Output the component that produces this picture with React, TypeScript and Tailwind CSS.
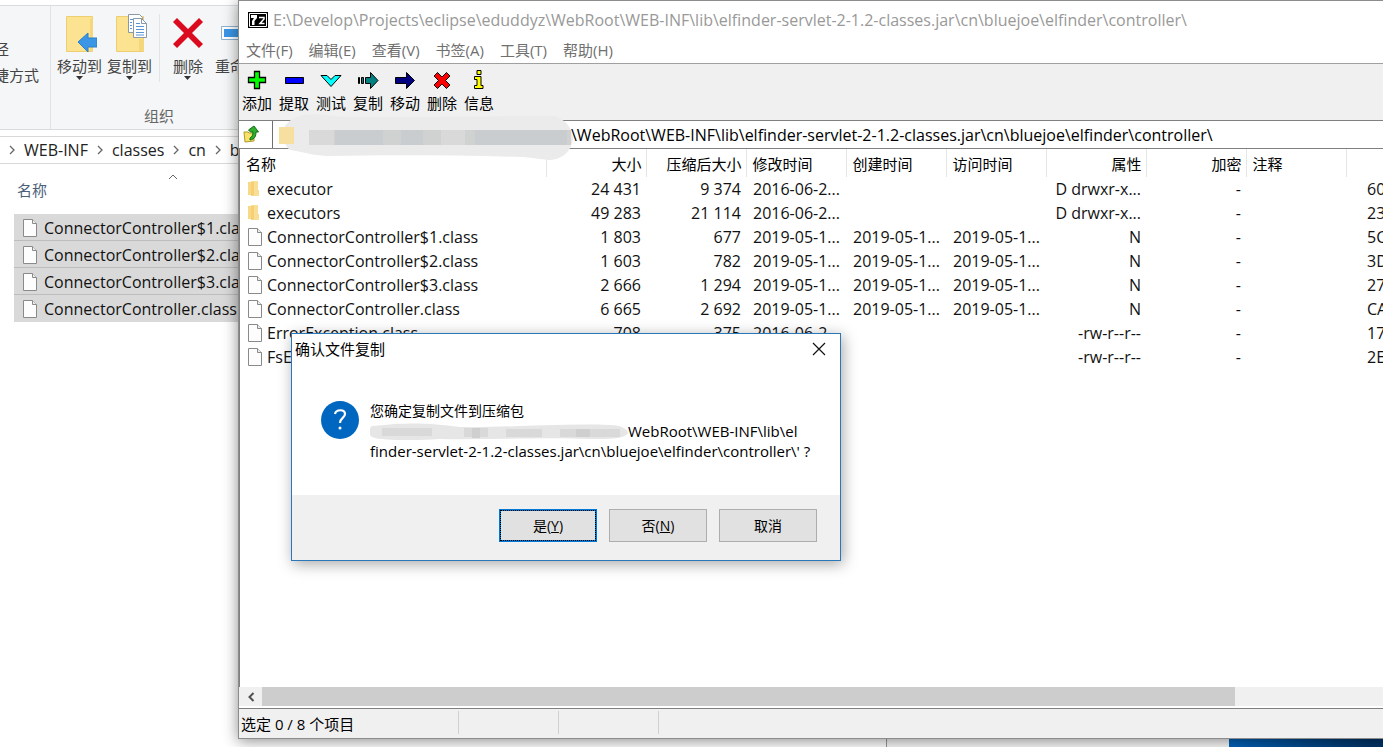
import type { ReactNode } from "react";

type Entry = {
  name: string;
  folder?: boolean;
  size: string;
  packed: string;
  modified?: string;
  created?: string;
  accessed?: string;
  attrs: string;
  crc: string;
};

const entries: Entry[] = [
  { name: "executor", folder: true, size: "24 431", packed: "9 374", modified: "2016-06-2...", attrs: "D drwxr-x...", crc: "60" },
  { name: "executors", folder: true, size: "49 283", packed: "21 114", modified: "2016-06-2...", attrs: "D drwxr-x...", crc: "23" },
  { name: "ConnectorController$1.class", size: "1 803", packed: "677", modified: "2019-05-1...", created: "2019-05-1...", accessed: "2019-05-1...", attrs: "N", crc: "5C" },
  { name: "ConnectorController$2.class", size: "1 603", packed: "782", modified: "2019-05-1...", created: "2019-05-1...", accessed: "2019-05-1...", attrs: "N", crc: "3D" },
  { name: "ConnectorController$3.class", size: "2 666", packed: "1 294", modified: "2019-05-1...", created: "2019-05-1...", accessed: "2019-05-1...", attrs: "N", crc: "27" },
  { name: "ConnectorController.class", size: "6 665", packed: "2 692", modified: "2019-05-1...", created: "2019-05-1...", accessed: "2019-05-1...", attrs: "N", crc: "CA" },
  { name: "ErrorException.class", size: "708", packed: "375", modified: "2016-06-2...", attrs: "-rw-r--r--", crc: "17" },
  { name: "FsException.class", size: "", packed: "", attrs: "-rw-r--r--", crc: "2E" },
];

const explorerFiles = [
  "ConnectorController$1.class",
  "ConnectorController$2.class",
  "ConnectorController$3.class",
  "ConnectorController.class",
];

const menus = ["文件(F)", "编辑(E)", "查看(V)", "书签(A)", "工具(T)", "帮助(H)"];

function FileIcon() {
  return (
    <svg width="16" height="20" viewBox="0 0 16 20" className="shrink-0">
      <path d="M1.5 1.5h9l4 4v13h-13z" fill="#fdfdfd" stroke="#8a8a8a" />
      <path d="M10.5 1.5v4h4" fill="#eee" stroke="#8a8a8a" />
    </svg>
  );
}

function FolderIcon() {
  return (
    <svg width="16" height="20" viewBox="0 0 16 20" className="shrink-0">
      <path d="M1 3h3v13H1z" fill="#f7d988" />
      <path d="M4 2h7v9h1v6H4z" fill="#f9df95" />
      <path d="M4 3h3v13l-3 1z" fill="#f5cf72" />
    </svg>
  );
}

function MoveToIcon() {
  return (
    <svg width="34" height="40" viewBox="0 0 34 40">
      <path d="M3.5 2.5h26v35h-26z" fill="#fbe391" stroke="#edcf72" />
      <path d="M27 4.5v33h3v-33z" fill="#f4d67b" />
      <path d="M15 28l10-9v5h9v9h-9v5z" fill="#3b96e6" stroke="#2a7fcb" />
    </svg>
  );
}

function CopyToIcon() {
  return (
    <svg width="34" height="40" viewBox="0 0 34 40">
      <path d="M3.5 2.5h27v35h-27z" fill="#fbe391" stroke="#edcf72" />
      <path d="M26 25h5v12h-5z" fill="#f4d67b" />
      <path d="M15.5 0.5h11l3 3v15h-14z" fill="#fff" stroke="#8b98a6" />
      <path d="M20.5 4.5h8l5 5v14h-13z" fill="#fff" stroke="#8b98a6" />
      <path d="M28.5 4.5v5h5" fill="none" stroke="#8b98a6" />
      <path d="M23 9.5h4M23 12.5h8M23 15.5h8M23 18.5h8M23 21h8M17 5.5h3M17 8.5h2M17 11.5h2M17 14.5h2" stroke="#5b94d6" />
    </svg>
  );
}

function DeleteIcon() {
  return (
    <svg width="34" height="40" viewBox="0 0 34 40">
      <path d="M2 8l4-4 11 11L28 4l4 4-11 11 11 11-4 4-11-11L6 34l-4-4 11-11z" fill="#dc0a1e" />
    </svg>
  );
}

function RenameIcon() {
  return (
    <svg width="34" height="40" viewBox="0 0 34 40">
      <path d="M0.5 12.5h33v13h-33z" fill="#fff" stroke="#8fb2d3" />
      <path d="M3 15h24v8H3z" fill="#3b96e6" />
    </svg>
  );
}

function RibbonButton({ icon, label, arrow = true }: { icon: ReactNode; label: string; arrow?: boolean }) {
  return (
    <button className="flex shrink-0 flex-col items-center whitespace-nowrap">
      {icon}
      <span className="mt-0.5 leading-5">{label}</span>
      {arrow && (
        <svg width="8" height="4" viewBox="0 0 8 4">
          <path d="M0 0h7L3.5 4z" fill="#333" />
        </svg>
      )}
    </button>
  );
}

function Chevron() {
  return (
    <svg width="6" height="10" viewBox="0 0 6 10" className="shrink-0">
      <path d="M1 1l4 4-4 4" fill="none" stroke="#666" strokeWidth="1.3" />
    </svg>
  );
}

function Explorer() {
  return (
    <section className="absolute inset-y-0 left-0 w-[887px] overflow-hidden border-r border-[#999] bg-white pt-[5px]">
      <div className="flex h-[125px] border-y border-[#dadbdc] bg-[#f5f6f7] text-[#444]">
        <div className="flex w-[51px] shrink-0 flex-col items-end gap-[6px] border-r border-[#e2e3e4] pr-[11px] pt-[33px] leading-5 whitespace-nowrap">
          <span className="pr-[30px]">径</span>
          <span>捷方式</span>
        </div>
        <div className="flex shrink-0 flex-col">
          <div className="flex pt-2 pl-1.5">
            <div className="flex gap-[5px]">
              <RibbonButton icon={<MoveToIcon />} label="移动到" />
              <RibbonButton icon={<CopyToIcon />} label="复制到" />
            </div>
            <div className="ml-[7px] h-[68px] border-l border-[#e2e3e4]" />
            <div className="ml-[11px] flex items-start gap-[10px]">
              <RibbonButton icon={<DeleteIcon />} label="删除" />
              <RibbonButton icon={<RenameIcon />} label="重命名" arrow={false} />
            </div>
          </div>
          <div className="mt-auto mb-[3px] pl-[93px] leading-5 text-[#666]">组织</div>
        </div>
      </div>
      <nav className="mt-1.5 flex h-7 items-center gap-[9px] border-y border-[#d9d9d9] pl-[9px] text-base text-[#222]">
        <Chevron />
        <a href="#web-inf">WEB-INF</a>
        <Chevron />
        <a href="#classes">classes</a>
        <Chevron />
        <a href="#cn">cn</a>
        <Chevron />
        <a href="#bluejoe">bluejoe</a>
      </nav>
      <div className="flex h-[50px] flex-col pt-[10px] pl-[17px] text-[#4c607a]">
        <svg width="10" height="6" viewBox="0 0 10 6" className="ml-[151px]">
          <path d="M1 5l4-4 4 4" fill="none" stroke="#666" />
        </svg>
        <span className="leading-5">名称</span>
      </div>
      <ul className="pl-[14px] text-base text-[#111]">
        {explorerFiles.map((name) => (
          <li key={name} className="flex h-[27px] items-center gap-1.5 border-b border-[#bdbdbd] bg-[#d9d9d9] pt-0.5 pl-2 last:border-[#d9d9d9]">
            <FileIcon />
            {name}
          </li>
        ))}
      </ul>
    </section>
  );
}

const tools: { label: string; icon: ReactNode }[] = [
  { label: "添加", icon: <path d="M8.5 1.5h5v6h6v5h-6v6h-5v-6h-6v-5h6z" fill="#0f0" stroke="#000" strokeWidth="1.3" /> },
  { label: "提取", icon: <path d="M2.5 7.5h18v6h-18z" fill="#00f" stroke="#000" /> },
  { label: "测试", icon: <path d="M1 5.5h6l4 4 4-4h6L11 16.5z" fill="#0ff" stroke="#000" /> },
  {
    label: "复制",
    icon: <path d="M1.5 7.5h1v6h-1zM4.5 7.5h2v6h-2zM8.5 7.5h5v-5l7.5 8-7.5 8v-5h-5z" fill="#008080" stroke="#000" />,
  },
  { label: "移动", icon: <path d="M1.5 7.5h11v-5l8 8-8 8v-5h-11z" fill="#000080" stroke="#000" /> },
  {
    label: "删除",
    icon: <path d="M3 6l3.5-3.5L11 7l4.5-4.5L19 6l-4.5 4.5L19 15l-3.5 3.5L11 14l-4.5 4.5L3 15l4.5-4.5z" fill="#f00" stroke="#000" />,
  },
  {
    label: "信息",
    icon: <path d="M9 0.5h4v4H9zM6.5 6.500H13v9h2v3H6.5v-3H9v-6H6.5z" fill="#ff0" stroke="#000" />,
  },
];

function Smudge() {
  return (
    <svg width="302" height="50" viewBox="0 0 302 50" className="pointer-events-none absolute -top-[9px] left-0">
      <path d="M12 14C18 6 26 2 42 2l30 3h50l160-1c10 4 16 10 18 22-1 12-10 22-24 22l-26-3c-70-2-140-2-195-1-12 0-25-4-38-6C12 34 8 26 12 14z" fill="#ebebeb" />
      <path d="M6 15h15v17H6z" fill="#f7dfa0" />
      <path d="M36 18h262v15H36z" fill="#d0d1d1" />
      <path d="M36 18h25v15H36zM168 18h24v15h-24z" fill="#d9d9d9" />
      <path d="M62 18h48v15H62zM128 18h22v15h-22zM202 18h92v15h-92z" fill="#cacdcf" />
    </svg>
  );
}

function SevenZip() {
  return (
    <section className="absolute top-0 right-0 bottom-2 left-[238px] flex flex-col border border-r-0 border-[#8c8c8c] bg-white shadow-[0_2px_14px_rgba(0,0,0,0.45)]">
      <header className="flex h-[37px] shrink-0 items-center gap-[5px] pl-[9px] text-base whitespace-nowrap text-[#999]">
        <svg width="20" height="16" viewBox="0 0 20 16">
          <path d="M0 0h20v16H0z" fill="#000" />
          <path d="M1.5 1.5h17v13h-17z" fill="none" stroke="#fff" />
          <path d="M3 3h6v3L6.5 9v4H4V9l2-3H3z" fill="#fff" />
          <path d="M11 5.5h5v1.5l-4 4.5h4.5" fill="none" stroke="#fff" strokeWidth="1.5" />
        </svg>
        <h1>E:\Develop\Projects\eclipse\eduddyz\WebRoot\WEB-INF\lib\elfinder-servlet-2-1.2-classes.jar\cn\bluejoe\elfinder\controller\</h1>
      </header>
      <div className="flex h-[26px] shrink-0 items-center gap-4 border-b border-[#a0a0a0] pl-[7px] text-[#707070]">
        {menus.map((m) => (
          <button key={m}>{m}</button>
        ))}
      </div>
      <div className="flex h-14 shrink-0 gap-[7px] bg-[#f0f0f0] pt-1.5 pl-[3px]">
        {tools.map((t) => (
          <button key={t.label} className="flex w-[30px] flex-col items-center whitespace-nowrap">
            <svg width="22" height="21" viewBox="0 0 22 21">{t.icon}</svg>
            <span className="leading-6">{t.label}</span>
          </button>
        ))}
      </div>
      <div className="flex h-[29px] shrink-0 border-y border-[#808080]">
        <button aria-label="上一级" className="w-[33px] pb-0.5 pl-1">
          <svg width="16" height="18" viewBox="0 0 16 18">
            <path d="M1 7h4l1 1h5v8L2 17z" fill="#f8e26a" stroke="#b09a2a" />
            <path d="M7 15c5-1 6-4 6-8h2.500L11 1 5.500 5l2 2H10c0 3-1 5-3 6z" fill="#2fae2f" stroke="#146e14" />
          </svg>
        </button>
        <div className="relative flex flex-1 items-center border-l border-[#707070] pl-[298px]">
          <Smudge />
          <input
            aria-label="地址"
            className="w-full bg-transparent text-base text-black outline-none"
            defaultValue="\WebRoot\WEB-INF\lib\elfinder-servlet-2-1.2-classes.jar\cn\bluejoe\elfinder\controller\"
          />
        </div>
      </div>
      <div className="flex-1 overflow-hidden border-l border-[#808080]">
        <table className="w-[1206px] table-fixed whitespace-nowrap text-base text-[#111]">
          <colgroup>
            <col className="w-[306px]" />
            <col span={9} className="w-[100px]" />
          </colgroup>
          <thead className="text-[15px]">
            <tr className="h-7 text-black [&>th]:border-r [&>th]:border-[#e5e5e5] [&>th]:pt-0.5 [&>th]:pr-1 [&>th]:pl-1.5 [&>th]:font-normal">
              <th className="text-left">名称</th>
              <th className="text-right">大小</th>
              <th className="text-right">压缩后大小</th>
              <th className="text-left">修改时间</th>
              <th className="text-left">创建时间</th>
              <th className="text-left">访问时间</th>
              <th className="text-right">属性</th>
              <th className="text-right">加密</th>
              <th className="text-left">注释</th>
              <th />
            </tr>
          </thead>
          <tbody>
            {entries.map((e) => (
              <tr key={e.name} className="h-6 [&>td]:pr-[5px] [&>td]:pl-[7px]">
                <td>
                  <div className="flex items-center gap-1">
                    {e.folder ? <FolderIcon /> : <FileIcon />}
                    {e.name}
                  </div>
                </td>
                <td className="text-right">{e.size}</td>
                <td className="text-right">{e.packed}</td>
                <td>{e.modified}</td>
                <td>{e.created}</td>
                <td>{e.accessed}</td>
                <td className="text-right">{e.attrs}</td>
                <td className="text-right">-</td>
                <td />
                <td>
                  <span className="pl-3.5">{e.crc}</span>
                </td>
              </tr>
            ))}
          </tbody>
        </table>
      </div>
      <div className="flex h-[19px] shrink-0 bg-[#f0f0f0]">
        <button aria-label="向左滚动" className="flex w-[23px] items-center justify-center">
          <svg width="8" height="10" viewBox="0 0 8 10">
            <path d="M6.5 1l-4 4 4 4" fill="none" stroke="#505050" strokeWidth="2" />
          </svg>
        </button>
        <div className="mr-[148px] flex-1 bg-[#cdcdcd]" />
      </div>
      <footer className="mt-0.5 flex h-[30px] shrink-0 border-t border-[#808080] bg-[#f0f0f0] pt-0.5 pb-1 leading-[26px] text-black">
        <div className="w-[220px] border-r border-[#d0d0d0] pl-0.5">选定 0 / 8 个项目</div>
        <div className="w-[100px] border-r border-[#d0d0d0]" />
        <div className="w-[100px] border-r border-[#d0d0d0]" />
      </footer>
    </section>
  );
}

function ConfirmDialog() {
  return (
    <section
      role="dialog"
      aria-labelledby="dialog-title"
      className="absolute top-[333px] left-[291px] flex w-[550px] flex-col border border-[#2b78b8] bg-white text-black shadow-[2px_3px_14px_rgba(0,0,0,0.35)]"
    >
      <header className="flex h-[30px] items-center justify-between pr-[14px] pl-[3px]">
        <h2 id="dialog-title">确认文件复制</h2>
        <button aria-label="关闭">
          <svg width="14" height="14" viewBox="0 0 14 14">
            <path d="M1 1l12 12M13 1L1 13" stroke="#111" strokeWidth="1.2" />
          </svg>
        </button>
      </header>
      <div className="flex h-[131px] gap-[10px] pt-9 pl-7 text-sm">
        <svg width="40" height="40" viewBox="0 0 40 40" className="shrink-0">
          <circle cx="20" cy="20" r="19" fill="#0067c0" />
          <path d="M15 14c1-5 10-5 10 0 0 4-5 4-5 9" fill="none" stroke="#fff" strokeWidth="2.2" />
          <circle cx="20" cy="28" r="1.5" fill="#fff" />
        </svg>
        <div className="pt-px leading-5 whitespace-nowrap">
          <p>您确定复制文件到压缩包</p>
          <p className="flex items-center text-[15px]">
            <svg width="258" height="18" viewBox="0 0 258 18">
              <path d="M2 4C40 0 60 1 90 5c40 1 100-4 150-2 12 0 18 5 18 8-4 6-16 6-40 6-40-2-100 1-150 0-30 2-60 1-66-2-5-3-4-8 0-11z" fill="#e6e6e6" />
              <path d="M12 6h50v8H12zM94 6h24v9H94zM136 7h36v8h-36zM190 7h60v8h-60z" fill="#d9d9d9" />
              <path d="M102 6h8v10h-8zM206 7h14v8h-14z" fill="#cfcfcf" />
            </svg>
            <span>WebRoot\WEB-INF\lib\el</span>
          </p>
          <p className="text-[15px]">finder-servlet-2-1.2-classes.jar\cn\bluejoe\elfinder\controller\' ?</p>
        </div>
      </div>
      <div className="flex justify-end gap-3 bg-[#f0f0f0] pt-[14px] pr-[23px] pb-[18px] text-sm">
        <button className="h-[33px] w-[98px] border-2 border-[#0078d7] bg-[#e1e1e1] outline-1 -outline-offset-2 outline-dotted outline-black">
          是(<u>Y</u>)
        </button>
        <button className="h-[33px] w-[98px] border border-[#adadad] bg-[#e1e1e1]">
          否(<u>N</u>)
        </button>
        <button className="h-[33px] w-[98px] border border-[#adadad] bg-[#e1e1e1]">取消</button>
      </div>
    </section>
  );
}

export default function App() {
  return (
    <main className="relative h-screen overflow-hidden bg-[#f8f8f8] font-['Open_Sans','Noto_Sans_CJK_SC',sans-serif] text-[15px]">
      <div className="ml-[1229px] h-full bg-linear-to-r from-[#0062b8] to-[#003060]" />
      <Explorer />
      <SevenZip />
      <ConfirmDialog />
    </main>
  );
}
